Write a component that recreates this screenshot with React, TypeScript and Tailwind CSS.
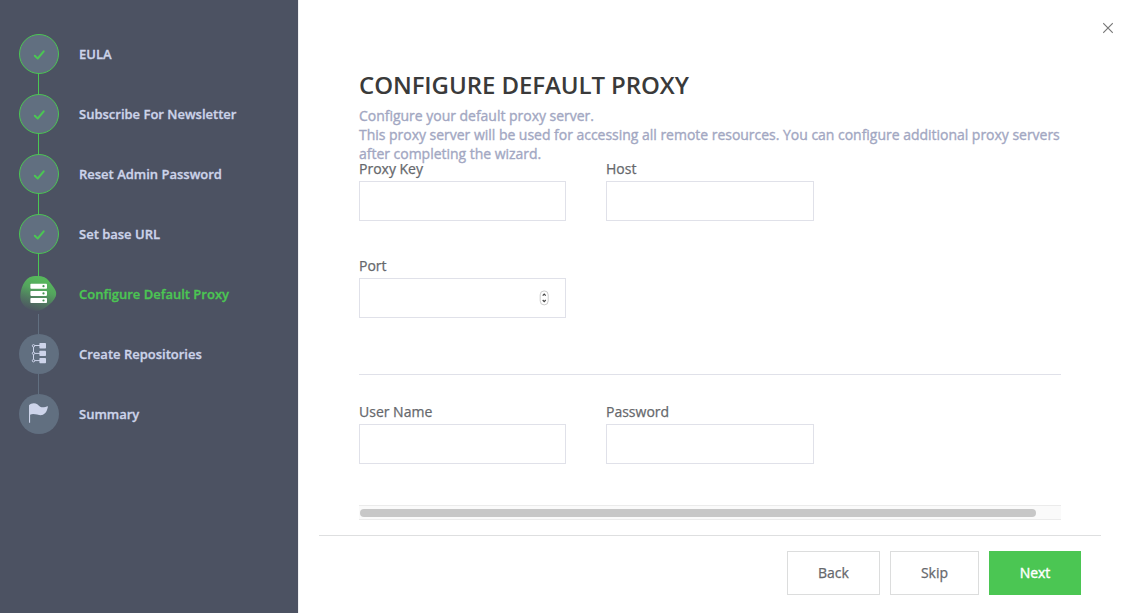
import { Fragment } from "react";

type StepState = "done" | "active" | "pending";
type IconName = "proxy" | "repos" | "flag";

interface Step {
  label: string;
  state: StepState;
  icon?: IconName;
}

const steps: Step[] = [
  { label: "EULA", state: "done" },
  { label: "Subscribe For Newsletter", state: "done" },
  { label: "Reset Admin Password", state: "done" },
  { label: "Set base URL", state: "done" },
  { label: "Configure Default Proxy", state: "active", icon: "proxy" },
  { label: "Create Repositories", state: "pending", icon: "repos" },
  { label: "Summary", state: "pending", icon: "flag" },
];

function CheckIcon() {
  return (
    <svg width="40" height="40" viewBox="0 0 40 40" fill="none" className="-m-px shrink-0">
      <path d="M15.800 21.700l2.900 2.800 6-7.200" stroke="#4bc653" strokeWidth="2" strokeLinecap="round" strokeLinejoin="round" />
    </svg>
  );
}

function ProxyIcon() {
  return (
    <svg width="40" height="40" viewBox="0 0 40 40">
      <defs>
        <linearGradient id="blob" x1="0.65" y1="0" x2="0.32" y2="1">
          <stop offset="0.1" stopColor="#57b75c" />
          <stop offset="0.4" stopColor="#54a45e" />
          <stop offset="0.7" stopColor="#507860" />
          <stop offset="1" stopColor="#4d5362" />
        </linearGradient>
      </defs>
      <path
        d="M10.500 3.200C14 1.600 21.500 1.400 25.500 3.200C29 4.800 30.500 7.800 33.500 11.800C36 15.200 38.300 18 36.700 22.500C35.200 26.600 31.500 29.500 28 32.500C25 35 20.500 37.500 15.500 36.800C9.500 36 3.500 32.500 1.700 25.500C0.200 19.500 3.500 6.800 10.500 3.200Z"
        fill="url(#blob)"
      />
      <g fill="#fff">
        <rect x="11.400" y="9.700" width="16.600" height="5" rx="0.800" />
        <rect x="11.400" y="16.900" width="16.600" height="5" rx="0.800" />
        <rect x="11.400" y="24" width="16.600" height="5" rx="0.800" />
      </g>
      <g fill="#459553">
        <circle cx="24.500" cy="12.200" r="1.100" />
        <circle cx="24.500" cy="19.400" r="1.100" />
        <circle cx="24.500" cy="26.500" r="1.100" />
      </g>
    </svg>
  );
}

function ReposIcon() {
  return (
    <svg width="40" height="40" viewBox="0 0 40 40" fill="none">
      <path d="M14.500 13V25.500M15.500 11.500H21M15.500 19.400H21M15.500 26.600H21" stroke="#cdd4ea" strokeWidth="1" />
      <g fill="#616f80" stroke="#cdd4ea" strokeWidth="1">
        <circle cx="14.500" cy="11.800" r="1.200" />
        <circle cx="14.500" cy="19.300" r="1.200" />
        <circle cx="14.500" cy="26.700" r="1.200" />
      </g>
      <g fill="#cdd4ea">
        <rect x="20.400" y="9.100" width="6.600" height="5.300" rx="0.700" />
        <rect x="20.400" y="16.700" width="6.600" height="5.300" rx="0.700" />
        <rect x="20.400" y="24" width="6.600" height="5.300" rx="0.700" />
      </g>
    </svg>
  );
}

function FlagIcon() {
  return (
    <svg width="40" height="40" viewBox="0 0 40 40" fill="#cdd4ea">
      <path d="M10 11.300C11.500 9.300 15.500 8.200 18.300 10.200C20 11.500 20.400 12.800 22.500 13.200C24.500 13.500 27 12.900 29 12.300C28.300 16.500 26.500 20.200 23.200 21C19.500 21.800 15 18.600 11.100 20.700V28.800H10Z" />
    </svg>
  );
}

const icons = { proxy: ProxyIcon, repos: ReposIcon, flag: FlagIcon };

function StepMarker({ step }: { step: Step }) {
  if (step.state === "done" || !step.icon) {
    return (
      <div className="size-10 shrink-0 rounded-full border border-[#4bc653] bg-[#616f80]">
        <CheckIcon />
      </div>
    );
  }
  const Icon = icons[step.icon];
  return (
    <div className={step.state === "active" ? "size-10 shrink-0" : "size-10 shrink-0 rounded-full bg-[#616f80]"}>
      <Icon />
    </div>
  );
}

function Sidebar() {
  return (
    <aside className="w-[298px] shrink-0 bg-[#4c5262] pl-[19px] pt-[34px]">
      {steps.map((step, i) => (
        <Fragment key={step.label}>
          {i > 0 && (
            <div className="h-5 pl-[19px]">
              <div
                className={
                  step.state === "pending"
                    ? "h-5 w-px bg-[#616f80]"
                    : step.state === "active"
                      ? "h-[23px] w-px bg-[#4bc653]"
                      : "h-5 w-px bg-[#4bc653]"
                }
              />
            </div>
          )}
          <div className="flex h-10 items-center gap-5">
            <StepMarker step={step} />
            <span
              className={
                step.state === "active"
                  ? "text-[13px] font-semibold text-[#4bc653] [-webkit-text-stroke:0.3px]"
                  : "text-[13px] font-semibold text-[#cdd4ea] [-webkit-text-stroke:0.3px]"
              }
            >
              {step.label}
            </span>
          </div>
        </Fragment>
      ))}
    </aside>
  );
}

function Field({ label, wide, type = "text" }: { label: string; wide?: boolean; type?: string }) {
  return (
    <label className={wide ? "block w-[208px]" : "block w-[207px]"}>
      <span className="block h-[22px] leading-[19px]">{label}</span>
      <span className="flex h-10 items-center justify-end border border-[#e0e1e9] bg-white pr-4">
        <input type="text" inputMode={type === "number" ? "numeric" : "text"} className="h-full min-w-0 flex-1 px-3 outline-none" />
        {type === "number" && (
          <svg width="10" height="16" viewBox="0 0 10 16" fill="none">
            <rect x="1.200" y="0.900" width="8" height="14" rx="4" fill="#fff" stroke="#c6c6c6" strokeWidth="0.900" />
            <path d="M3.700 5.700L5.200 4.100L6.700 5.700M3.700 10L5.200 11.600L6.700 10" stroke="#444" strokeWidth="1.200" />
          </svg>
        )}
      </span>
    </label>
  );
}

export default function App() {
  return (
    <div className="flex h-[613px] w-[1133px] overflow-hidden bg-white font-['Open_Sans',sans-serif] text-sm text-[#66686c] [-webkit-text-stroke:0.25px]">
      <Sidebar />
      <main className="flex min-w-0 flex-1 flex-col border-l border-[#f0f0f2]">
        <div className="flex h-[68px] justify-end pr-5 pt-[22px]">
          <button aria-label="Close" className="h-3 w-[10px]">
            <svg width="10" height="12" viewBox="0 0 10 12" fill="none">
              <path d="M0.200 1.200L9.800 10.800M9.800 1.200L0.200 10.800" stroke="#777" strokeWidth="1.100" />
            </svg>
          </button>
        </div>
        <div className="ml-[60px] h-[467px] w-[702px]">
          <h1 className="h-[38px] whitespace-nowrap text-2xl font-semibold leading-[34px] tracking-[-0.08px] text-[#3a3a3a] [-webkit-text-stroke:0px]">
            CONFIGURE DEFAULT PROXY
          </h1>
          <p className="h-[53px] whitespace-nowrap leading-[19px] tracking-[-0.022px] text-[#a2a7c2] [-webkit-text-stroke:0.35px]">
            Configure your default proxy server.
            <br />
            This proxy server will be used for accessing all remote resources. You can configure additional proxy servers
            <br />
            after completing the wizard.
          </p>
          <div className="flex gap-10 pb-[35px]">
            <Field label="Proxy Key" />
            <Field label="Host" wide />
          </div>
          <Field label="Port" type="number" />
          <hr className="mb-[27px] mt-14 border-[#e0e1e9]" />
          <div className="flex gap-10 pb-[41px]">
            <Field label="User Name" />
            <Field label="Password" wide />
          </div>
          <div className="h-[15px] border-y border-[#ebebeb] bg-[#fafafa] pl-px pt-[3px]">
            <div className="h-2 w-[676px] rounded-full bg-[#c7c7c7]" />
          </div>
        </div>
        <footer className="ml-5 flex h-[78px] w-[782px] justify-end gap-[10px] border-t border-[#dedfe0] pr-5 pt-[15px]">
          <button className="h-11 w-[93px] border border-[#dcdddd]">Back</button>
          <button className="h-11 w-[89px] border border-[#dcdddd]">Skip</button>
          <button className="h-11 w-[92px] bg-[#4bc653] text-white [-webkit-text-stroke:0.4px]">Next</button>
        </footer>
      </main>
    </div>
  );
}
